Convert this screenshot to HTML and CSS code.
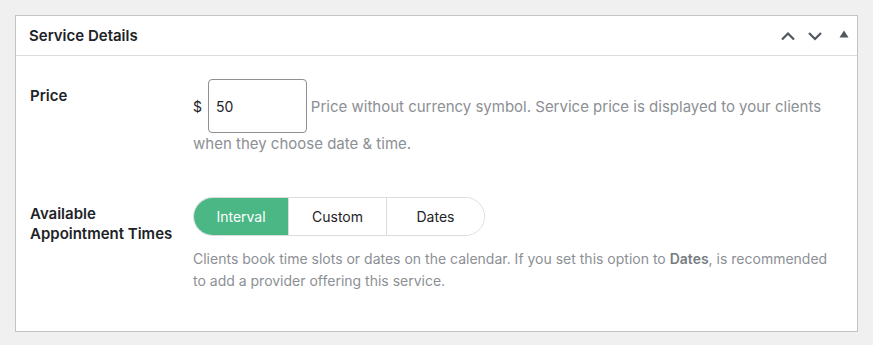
FILE: index.html
```html
<!DOCTYPE html>
<html lang="en">
<head>
    <meta charset="UTF-8">
    <meta name="viewport" content="width=device-width, initial-scale=1.0">
    <title>Service Details</title>
    <link rel="stylesheet" href="styles.css">
</head>
<body>
    <div class="postbox">
        <div class="postbox-header">
            <h2 class="postbox-title">Service Details</h2>
            <div class="handle-actions">
                <button class="handle-btn" aria-label="Move up">
                    <svg width="16" height="16" viewBox="0 0 16 16"><path d="M2 11.5 L8 5.5 L14 11.5" fill="none" stroke="#50575e" stroke-width="2.2"/></svg>
                </button>
                <button class="handle-btn" aria-label="Move down">
                    <svg width="16" height="16" viewBox="0 0 16 16"><path d="M2 5 L8 11 L14 5" fill="none" stroke="#50575e" stroke-width="2.2"/></svg>
                </button>
                <button class="handle-btn toggle" aria-label="Toggle panel">
                    <svg width="10" height="8" viewBox="0 0 10 8"><path d="M5 0.5 L9.5 7.5 L0.5 7.5 Z" fill="#50575e"/></svg>
                </button>
            </div>
        </div>

        <div class="postbox-inside">
            <!-- 价格 -->
            <div class="form-row">
                <div class="form-label">Price</div>
                <div class="form-field">
                    <span class="currency">$</span>
                    <input class="price-input" type="text" value="50">
                    <span class="description wide">Price without currency symbol. Service price is displayed to your clients when they choose date &amp; time.</span>
                </div>
            </div>

            <!-- 可预约时间 -->
            <div class="form-row">
                <div class="form-label">Available Appointment Times</div>
                <div class="form-field">
                    <div class="segmented">
                        <button class="segment active">Interval</button>
                        <button class="segment">Custom</button>
                        <button class="segment">Dates</button>
                    </div>
                    <p class="description block">Clients book time slots or dates on the calendar. If you set this option to <strong>Dates</strong>, is recommended to add a provider offering this service.</p>
                </div>
            </div>
        </div>
    </div>
</body>
</html>
```

FILE: styles.css
```css
body {
    margin: 0;
    padding: 15px 15px 0 15px;
    background-color: #f0f0f1;
    font-family: Inter, 'Liberation Sans', Arial, sans-serif;
    font-size: 14px;
    color: #1d2327;
}
.postbox {
    width: 841px;
    background: #ffffff;
    border: 1px solid #c3c4c7;
    box-shadow: 0 1px 1px rgba(0, 0, 0, 0.04);
}
.postbox-header {
    height: 39px;
    display: flex;
    align-items: center;
    justify-content: space-between;
    padding: 0 0 0 13px;
    border-bottom: 1px solid #dcdcde;
}
.postbox-title {
    margin: 0;
    font-size: 15px;
    font-weight: 600;
    line-height: 1.4;
    color: #1d2327;
}
.handle-actions {
    display: flex;
    align-items: center;
}
.handle-btn {
    width: 27px;
    height: 36px;
    padding: 0;
    border: 0;
    background: none;
    display: flex;
    align-items: center;
    justify-content: center;
}
.handle-btn.toggle {
    width: 26px;
    margin-left: 3px;
    padding-bottom: 4px;
}

/* 表单内容 */
.postbox-inside {
    padding: 8px 14px 24px 14px;
}
.form-row {
    display: flex;
    padding: 15px 0;
}
.form-row + .form-row {
    margin-top: 12px;
}
.form-label {
    width: 149px;
    flex-shrink: 0;
    padding: 7px 14px 0 0;
    font-size: 15px;
    font-weight: 600;
    line-height: 20px;
}
.form-field {
    flex: 1;
    line-height: 22px;
    padding-right: 10px;
}
.currency {
    margin-right: 2px;
}
.price-input {
    width: 99px;
    height: 54px;
    box-sizing: border-box;
    padding: 0 7px;
    margin: 0;
    border: 1px solid #8c8f94;
    border-radius: 4px;
    font-family: inherit;
    font-size: 14px;
    color: #1d2327;
    vertical-align: baseline;
}
.description {
    color: #8c8f94;
}
.description.wide {
    font-size: 15px;
}
.description.block {
    margin: 12px 0 0 0;
}
.description strong {
    color: #787c82;
    font-weight: 600;
}

/* 分段按钮 */
.segmented {
    display: inline-flex;
    height: 39px;
    box-sizing: border-box;
    border: 1px solid #dcdcde;
    border-radius: 20px;
    overflow: hidden;
}
.segment {
    width: 98px;
    border: 0;
    border-left: 1px solid #dcdcde;
    background: #ffffff;
    font-family: inherit;
    font-size: 14px;
    color: #1d2327;
    padding: 0;
}
.segment:first-child {
    border-left: 0;
    width: 94px;
}
.segment.active {
    background: #4ab784;
    color: #ffffff;
}
```
